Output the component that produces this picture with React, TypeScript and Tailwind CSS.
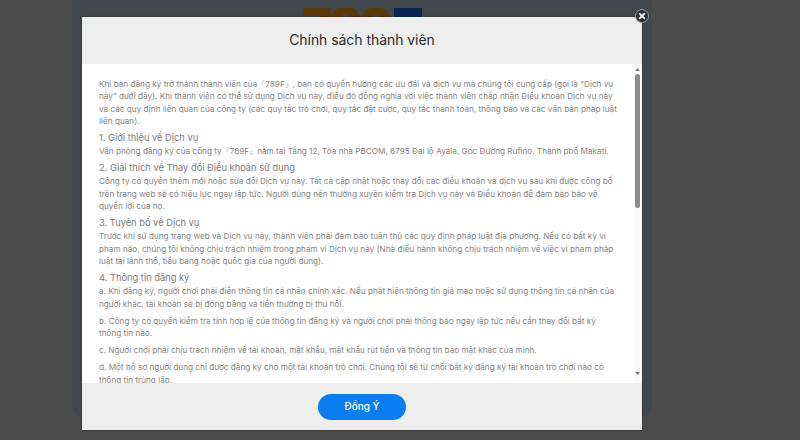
export default function App() {
    const p = "mb-[4.5px] text-[8.2px] leading-[12.5px] text-[#858585]"
    const h = "mb-[0.5px] text-[9.3px] leading-[12.5px] text-[#7a7a7a]"

    return (
        <div className="relative h-[440px] w-[800px] overflow-hidden bg-[#4b4b4b] font-['Inter','Noto_Sans',sans-serif]">
            {/* page behind the dimmed overlay */}
            <div className="mx-[72px] flex h-[418px] w-[580px] justify-center rounded-b-[14px] bg-[#41474a] pt-[8px]">
                <div className="flex h-[30px] items-start gap-[3px] overflow-hidden">
                    <span className="mt-[-7px] text-[50px] font-black leading-[50px] tracking-tighter text-[#5a3a08]">789</span>
                    <span className="h-[30px] w-[28px] bg-[#0a2552]" />
                </div>
            </div>

            {/* modal */}
            <div className="absolute left-[82px] top-[17px] flex h-[413px] w-[560px] flex-col bg-white shadow-[0_0_2px_rgba(0,0,0,0.4)]">
                <div className="flex h-[47px] shrink-0 items-center justify-center bg-[#eeeeee] text-[13.9px] text-[#2b2b2b]">
                    Chính sách thành viên
                </div>

                <div className="flex min-h-0 flex-1">
                    <div className="min-w-0 flex-1 overflow-hidden pl-[17px] pr-[14px] pt-[13.5px]">
                        <p className={p}>
                            Khi bạn đăng ký trở thành thành viên của『789F』, bạn có quyền hưởng các ưu đãi và dịch vụ mà chúng tôi cung cấp (gọi là "Dịch vụ này" dưới đây). Khi thành viên có thể sử dụng Dịch vụ này, điều đó đồng nghĩa với việc thành viên chấp nhận Điều khoản Dịch vụ này và các quy định liên quan của công ty (các quy tắc trò chơi, quy tắc đặt cược, quy tắc thanh toán, thông báo và các văn bản pháp luật liên quan).
                        </p>
                        <h3 className={h}>1. Giới thiệu về Dịch vụ</h3>
                        <p className={p}>
                            Văn phòng đăng ký của công ty『789F』nằm tại Tầng 12, Tòa nhà PBCOM, 6795 Đại lộ Ayala, Góc Đường Rufino, Thành phố Makati.
                        </p>
                        <h3 className={h}>2. Giải thích về Thay đổi Điều khoản sử dụng</h3>
                        <p className={p}>
                            Công ty có quyền thêm mới hoặc sửa đổi Dịch vụ này. Tất cả cập nhật hoặc thay đổi các điều khoản và dịch vụ sau khi được công bố trên trang web sẽ có hiệu lực ngay lập tức. Người dùng nên thường xuyên kiểm tra Dịch vụ này và Điều khoản để đảm bảo bảo vệ quyền lợi của họ.
                        </p>
                        <h3 className={h}>3. Tuyên bố về Dịch vụ</h3>
                        <p className={p}>
                            Trước khi sử dụng trang web và Dịch vụ này, thành viên phải đảm bảo tuân thủ các quy định pháp luật địa phương. Nếu có bất kỳ vi phạm nào, chúng tôi không chịu trách nhiệm trong phạm vi Dịch vụ này (Nhà điều hành không chịu trách nhiệm về việc vi phạm pháp luật tại lãnh thổ, tiểu bang hoặc quốc gia của người dùng).
                        </p>
                        <h3 className={h}>4. Thông tin đăng ký</h3>
                        <p className={p}>
                            a. Khi đăng ký, người chơi phải điền thông tin cá nhân chính xác. Nếu phát hiện thông tin giả mạo hoặc sử dụng thông tin cá nhân của người khác, tài khoản sẽ bị đóng băng và tiền thưởng bị thu hồi.
                        </p>
                        <p className={p}>
                            b. Công ty có quyền kiểm tra tính hợp lệ của thông tin đăng ký và người chơi phải thông báo ngay lập tức nếu cần thay đổi bất kỳ thông tin nào.
                        </p>
                        <p className={p}>
                            c. Người chơi phải chịu trách nhiệm về tài khoản, mật khẩu, mật khẩu rút tiền và thông tin bảo mật khác của mình.
                        </p>
                        <p className={p}>
                            d. Một hồ sơ người dùng chỉ được đăng ký cho một tài khoản trò chơi. Chúng tôi sẽ từ chối bất kỳ đăng ký tài khoản trò chơi nào có thông tin trùng lặp.
                        </p>
                    </div>

                    {/* scrollbar */}
                    <div className="flex w-[8px] shrink-0 flex-col items-center bg-[#fafafa] pr-[1px]">
                        <svg viewBox="0 0 6 4" className="mt-[4px] h-[3px] w-[5px] fill-[#777777]"><path d="M3 0 6 4H0z" /></svg>
                        <div className="mt-[3px] h-[134px] w-[5px] rounded-full bg-[#8c8c8c]" />
                        <svg viewBox="0 0 6 4" className="mb-[8px] mt-auto h-[3px] w-[5px] fill-[#777777]"><path d="M0 0H6L3 4z" /></svg>
                    </div>
                </div>

                <div className="flex h-[47px] shrink-0 items-center justify-center bg-[#eeeeee]">
                    <button className="h-[26px] w-[88px] rounded-full bg-[#0a7df0] text-[10px] font-medium text-white">
                        Đồng Ý
                    </button>
                </div>
            </div>

            {/* close button */}
            <button className="absolute left-[635px] top-[9px] flex h-[14px] w-[14px] items-center justify-center rounded-full border border-[#9a9a9a] bg-[#2a2d2f]">
                <svg viewBox="0 0 10 10" className="h-[8px] w-[8px] stroke-white" strokeWidth="2.2" strokeLinecap="round">
                    <path d="M2 2 8 8M8 2 2 8" />
                </svg>
            </button>
        </div>
    )
}
